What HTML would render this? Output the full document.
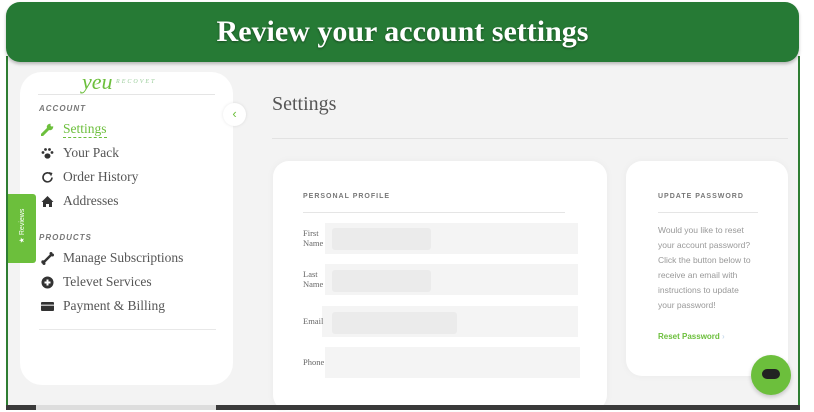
<!DOCTYPE html>
<html><head><style>
*{margin:0;padding:0;box-sizing:border-box}
body{width:814px;height:412px;background:#fff;position:relative;overflow:hidden;font-family:"Liberation Serif",serif}
.frame{position:absolute;left:6px;top:56px;width:794px;height:354px;background:#f3f3f3;border:2px solid #2e7d32;border-top:none}
.hdr{position:absolute;left:6px;top:2px;width:793px;height:60px;background:#267a35;border-radius:14px;box-shadow:0 2px 3px rgba(0,0,0,.25);color:#fff;font-size:30px;font-weight:bold;text-align:center;line-height:60px;font-family:"Liberation Serif",serif;text-shadow:0 1px 2px rgba(0,0,0,.4)}
.side{position:absolute;left:20px;top:72px;width:213px;height:313px;background:#fff;border-radius:22px}
.abs{position:absolute}
.cap{font-family:"Liberation Sans",sans-serif;font-size:8px;letter-spacing:1px;color:#777;font-weight:bold;font-style:italic}
.item{position:absolute;left:63px;font-size:13.5px;color:#555}
.ic{position:absolute;left:41px;width:13px;height:13px}
.card{position:absolute;background:#fff;border-radius:16px;box-shadow:0 0 8px rgba(0,0,0,.04)}
.lbl{position:absolute;left:303px;font-size:8.5px;color:#666;line-height:10px}
.fld{position:absolute;background:#f4f4f4}
.inner{position:absolute;background:#ebebeb;border-radius:3px}
.pw{font-family:"Liberation Sans",sans-serif;font-size:8.5px;color:#999;line-height:15px}
</style></head><body>
<div class="frame"></div>
<div class="hdr">Review your account settings</div>
<div class="side"></div>
<div class="abs" style="left:82px;top:70px;color:#6cbf3c;font-size:22px;font-style:italic;line-height:24px">yeu<span style="font-size:6px;letter-spacing:2px;color:#9c9;vertical-align:top">&nbsp;RECOVET</span></div>
<div class="abs" style="left:38px;top:94px;width:177px;height:1px;background:#e5e5e5"></div>
<div class="abs" style="left:223px;top:103px;width:23px;height:23px;border-radius:50%;background:#fff;box-shadow:0 0 3px rgba(0,0,0,.1);color:#6cbf3c;font-family:'Liberation Sans';font-size:13px;text-align:center;line-height:22px">‹</div>
<div class="abs cap" style="left:39px;top:104px">ACCOUNT</div>
<svg class="ic" style="top:123px" viewBox="0 0 13 13"><path d="M1 12 L7 6" stroke="#6cbf3c" stroke-width="3" stroke-linecap="round"/><circle cx="9" cy="4" r="3.2" fill="#6cbf3c"/><circle cx="11" cy="2" r="1.5" fill="#fff"/></svg>
<div class="item" style="top:121px;color:#6cbf3c;border-bottom:1px dashed #6cbf3c;line-height:16px">Settings</div>
<svg class="ic" style="top:147px" viewBox="0 0 13 13" fill="#333"><ellipse cx="6.5" cy="9" rx="3" ry="2.6"/><circle cx="2" cy="5.5" r="1.4"/><circle cx="11" cy="5.5" r="1.4"/><circle cx="4.5" cy="2.5" r="1.4"/><circle cx="8.5" cy="2.5" r="1.4"/></svg>
<div class="item" style="top:145px">Your Pack</div>
<svg class="ic" style="top:171px" viewBox="0 0 13 13"><path d="M11 6.5 A4.5 4.5 0 1 1 9.5 3" fill="none" stroke="#333" stroke-width="1.6"/><path d="M8 1 L11.5 2 L10 5.5Z" fill="#333"/></svg>
<div class="item" style="top:169px">Order History</div>
<svg class="ic" style="top:195px" viewBox="0 0 13 13" fill="#333"><path d="M6.5 1 L12.5 7 L11 7 L11 12 L8 12 L8 9 L5 9 L5 12 L2 12 L2 7 L0.5 7Z"/></svg>
<div class="item" style="top:193px">Addresses</div>
<div class="abs cap" style="left:39px;top:233px">PRODUCTS</div>
<svg class="ic" style="top:252px" viewBox="0 0 13 13"><path d="M2.5 10.5 L10.5 2.5" stroke="#333" stroke-width="2.4"/><circle cx="2" cy="10" r="1.7" fill="#333"/><circle cx="3" cy="11.5" r="1.5" fill="#333"/><circle cx="10" cy="1.5" r="1.5" fill="#333"/><circle cx="11.5" cy="3" r="1.5" fill="#333"/></svg>
<div class="item" style="top:250px">Manage Subscriptions</div>
<svg class="ic" style="top:276px" viewBox="0 0 13 13"><circle cx="6.5" cy="6.5" r="6" fill="#333"/><path d="M6.5 3.5V9.5M3.5 6.5H9.5" stroke="#fff" stroke-width="2"/></svg>
<div class="item" style="top:274px">Televet Services</div>
<svg class="ic" style="top:300px" viewBox="0 0 13 13"><rect x="0" y="2" width="13" height="9" rx="1" fill="#333"/><rect x="0" y="4.5" width="13" height="1.5" fill="#bbb"/></svg>
<div class="item" style="top:298px">Payment &amp; Billing</div>
<div class="abs" style="left:39px;top:329px;width:177px;height:1px;background:#e8e8e8"></div>
<div class="abs" style="left:8px;top:194px;width:28px;height:69px;background:#6cbf3c;border-radius:0 3px 3px 0"></div>
<div class="abs" style="left:0px;top:222px;width:44px;color:#fff;font-family:'Liberation Sans';font-size:7px;transform:rotate(-90deg);text-align:center">★ Reviews</div>
<div class="abs" style="left:272px;top:93px;font-size:20px;color:#555">Settings</div>
<div class="abs" style="left:272px;top:138px;width:516px;height:1px;background:#e2e2e2"></div>
<div class="card" style="left:273px;top:161px;width:334px;height:250px"></div>
<div class="card" style="left:626px;top:161px;width:162px;height:215px"></div>
<div class="abs cap" style="left:303px;top:193px;font-style:normal;font-size:7px;color:#777">PERSONAL PROFILE</div>
<div class="abs" style="left:303px;top:212px;width:262px;height:1px;background:#e5e5e5"></div>
<div class="fld" style="left:325px;top:223px;width:253px;height:31px"></div><div class="inner" style="left:332px;top:228px;width:99px;height:22px"></div>
<div class="lbl" style="top:228px">First<br>Name</div>
<div class="fld" style="left:325px;top:264px;width:253px;height:31px"></div><div class="inner" style="left:332px;top:270px;width:99px;height:22px"></div>
<div class="lbl" style="top:269px">Last<br>Name</div>
<div class="fld" style="left:322px;top:306px;width:256px;height:31px"></div><div class="inner" style="left:332px;top:312px;width:125px;height:22px"></div>
<div class="lbl" style="top:316px">Email</div>
<div class="fld" style="left:325px;top:347px;width:255px;height:31px"></div>
<div class="lbl" style="top:357px">Phone</div>
<div class="abs cap" style="left:658px;top:193px;font-style:normal;font-size:7px;color:#777">UPDATE PASSWORD</div>
<div class="abs" style="left:658px;top:212px;width:100px;height:1px;background:#e5e5e5"></div>
<div class="abs pw" style="left:658px;top:223px;width:97px">Would you like to reset your account password? Click the button below to receive an email with instructions to update your password!</div>
<div class="abs" style="left:658px;top:332px;font-family:'Liberation Sans';font-size:8px;font-weight:bold;color:#6cbf3c">Reset Password <span style="color:#cde">›</span></div>
<div class="abs" style="left:751px;top:355px;width:40px;height:40px;border-radius:50%;background:#6cbf3c;box-shadow:0 2px 4px rgba(0,0,0,.2)"></div>
<div class="abs" style="left:762px;top:369px;width:18px;height:10px;border-radius:5px;background:#222"></div>
<div class="abs" style="left:6px;top:405px;width:794px;height:5px;background:#3a3a3a"></div>
<div class="abs" style="left:36px;top:405px;width:180px;height:5px;background:#ddd"></div>
</body></html>
